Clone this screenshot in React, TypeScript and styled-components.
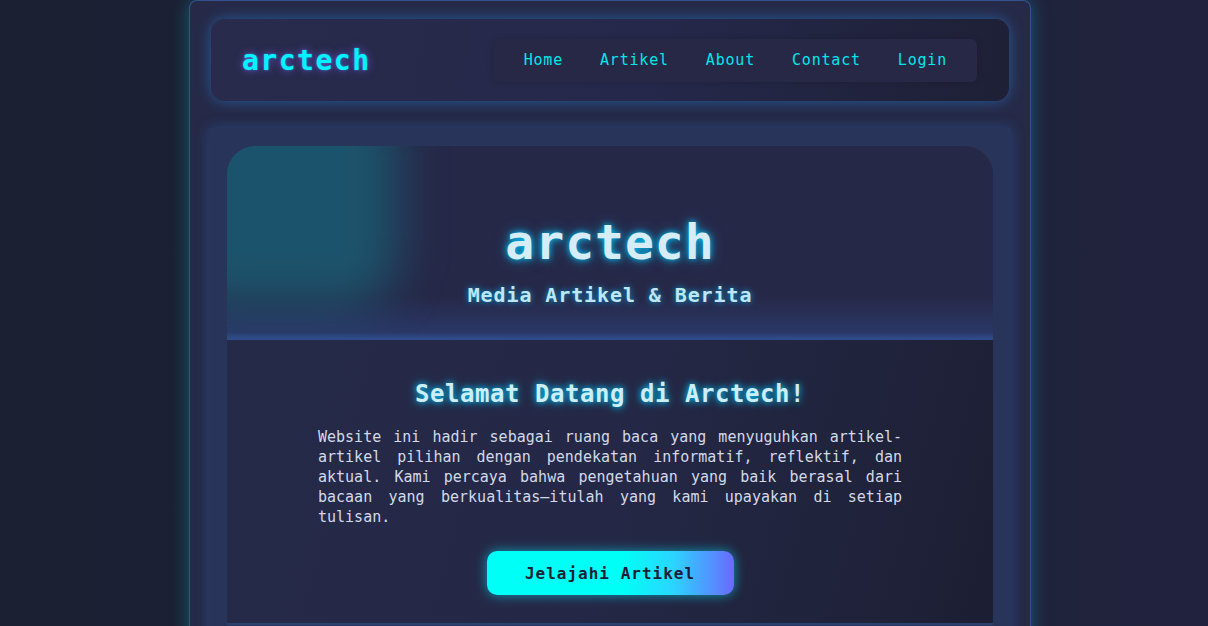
import React from "react";
import styled, { createGlobalStyle } from "styled-components";

const Global = createGlobalStyle`
  * { box-sizing: border-box; }
  html, body { margin: 0; padding: 0; }
  body {
    background: linear-gradient(90deg, #1b2033 0%, #1d2136 50%, #21233e 100%);
    font-family: "DejaVu Sans Mono", "Liberation Mono", monospace;
    min-height: 100vh;
    padding-left: 12px;
  }
`;

const Shell = styled.div`
  width: 842px;
  margin: 0 auto;
  min-height: 760px;
  padding: 18px 20px 30px;
  background: #262a48;
  border: 1px solid #33538f;
  border-bottom: none;
  border-radius: 8px 8px 0 0;
  box-shadow: 0 0 18px rgba(0, 200, 230, 0.35);
  display: flex;
  flex-direction: column;
  gap: 27px;
`;

const Header = styled.header`
  height: 82px;
  margin: 0 1px;
  border-radius: 14px;
  background: linear-gradient(100deg, #282b4b 0%, #25284a 55%, #1e2036 100%);
  box-shadow: 0 0 14px rgba(40, 150, 255, 0.45);
  display: flex;
  align-items: center;
  justify-content: space-between;
  padding: 0 32px 0 31px;
`;

const Logo = styled.div`
  font-size: 28px;
  font-weight: bold;
  letter-spacing: 1.5px;
  color: #00f4ff;
  text-shadow: 0 0 8px rgba(130, 90, 255, 0.8), 0 0 2px rgba(0, 255, 255, 0.6);
`;

const Nav = styled.nav`
  height: 43px;
  display: flex;
  align-items: center;
  gap: 37px;
  padding: 0 30px 0 31px;
  background: #262846;
  border-radius: 6px;
  box-shadow: 0 0 6px rgba(0, 0, 0, 0.15);
`;

const NavLink = styled.a`
  font-size: 15px;
  letter-spacing: 0.8px;
  color: #00e6ec;
  text-decoration: none;
`;

const Main = styled.main`
  margin: 0 -1px;
  padding: 18px;
  background: #283459;
  box-shadow: 0 0 12px rgba(40, 120, 220, 0.35);
`;

const Card = styled.section`
  border-radius: 28px 28px 0 0;
  overflow: hidden;
`;

const Hero = styled.div`
  position: relative;
  height: 194px;
  padding-top: 67px;
  display: flex;
  flex-direction: column;
  align-items: center;
  overflow: hidden;
  background: linear-gradient(180deg, #262848 0%, #262848 78%, #2a3766 97%, #2f4a86 100%);
  border-bottom: 2px solid #2f4a88;

  &::before {
    content: "";
    position: absolute;
    left: -60px;
    top: -60px;
    width: 230px;
    height: 220px;
    border-radius: 50px;
    background: rgba(18, 135, 150, 0.46);
    filter: blur(24px);
  }

  & > * {
    position: relative;
  }
`;

const HeroTitle = styled.h1`
  margin: 0;
  font-size: 48px;
  line-height: 58px;
  font-weight: bold;
  letter-spacing: 1px;
  color: #d6ecf6;
  text-shadow: 0 0 6px #00c8ff, 0 0 14px rgba(0, 200, 255, 0.5);
`;

const HeroSub = styled.p`
  margin: 12px 0 0;
  font-size: 20px;
  line-height: 24px;
  font-weight: bold;
  letter-spacing: 0.9px;
  color: #bfe6f4;
  text-shadow: 0 0 6px rgba(0, 190, 255, 0.8);
`;

const Welcome = styled.div`
  padding: 40px 0 28px;
  display: flex;
  flex-direction: column;
  align-items: center;
  background: linear-gradient(105deg, #262a49 0%, #242846 50%, #1c1f33 100%);
  border-bottom: 2px solid #2b4170;
`;

const WelcomeTitle = styled.h2`
  margin: 0;
  font-size: 24px;
  line-height: 29px;
  font-weight: bold;
  letter-spacing: 0.55px;
  color: #cdeef8;
  text-shadow: 0 0 6px #00c8ff, 0 0 12px rgba(0, 200, 255, 0.45);
`;

const Text = styled.p`
  margin: 18px 0 0;
  width: 584px;
  font-size: 15px;
  line-height: 20px;
  text-align: justify;
  color: #d2d9e8;
`;

const Button = styled.button`
  margin-top: 24px;
  width: 247px;
  height: 44px;
  border: none;
  border-radius: 10px;
  background: linear-gradient(90deg, #00fff6 0%, #00fff6 55%, #2ad6ff 75%, #6a6aff 100%);
  box-shadow: 0 0 12px rgba(0, 230, 255, 0.6);
  font-family: "DejaVu Sans Mono", "Liberation Mono", monospace;
  font-size: 16px;
  font-weight: bold;
  letter-spacing: 1px;
  color: #1b1e35;
  cursor: pointer;
`;

const links = ["Home", "Artikel", "About", "Contact", "Login"];

export default function App() {
  return (
    <>
      <Global />
      <Shell>
        <Header>
          <Logo>arctech</Logo>
          <Nav>
            {links.map((l) => (
              <NavLink key={l} href="#">{l}</NavLink>
            ))}
          </Nav>
        </Header>
        <Main>
          <Card>
            <Hero>
              <HeroTitle>arctech</HeroTitle>
              <HeroSub>Media Artikel &amp; Berita</HeroSub>
            </Hero>
            <Welcome>
              <WelcomeTitle>Selamat Datang di Arctech!</WelcomeTitle>
              <Text>
                Website ini hadir sebagai ruang baca yang menyuguhkan artikel-artikel pilihan dengan pendekatan informatif, reflektif, dan aktual. Kami percaya bahwa pengetahuan yang baik berasal dari bacaan yang berkualitas—itulah yang kami upayakan di setiap tulisan.
              </Text>
              <Button>Jelajahi Artikel</Button>
            </Welcome>
          </Card>
        </Main>
      </Shell>
    </>
  );
}
